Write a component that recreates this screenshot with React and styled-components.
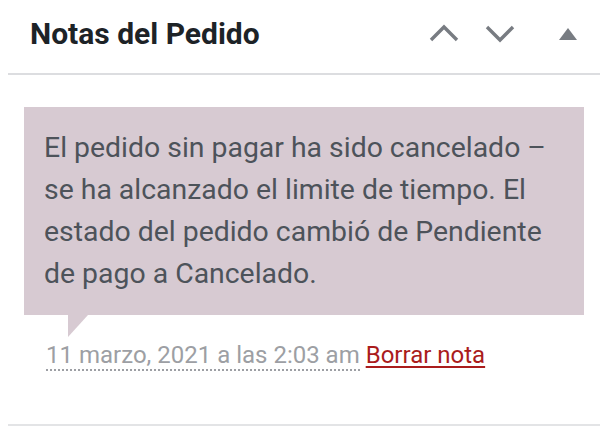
import React from 'react';
import styled, { createGlobalStyle } from 'styled-components';

const GlobalStyle = createGlobalStyle`
  html, body {
    margin: 0;
    padding: 0;
    background: #ffffff;
  }
  body {
    font-family: Roboto, "Liberation Sans", Arial, sans-serif;
  }
`;

const App = () => {
  return (
    <>
      <GlobalStyle />
      <Panel>
        <PanelHeader>
          <Title>Notas del Pedido</Title>
          <Actions>
            <HandleButton aria-label="Subir">
              <svg width="32" height="20" viewBox="0 0 32 20">
                <polyline points="3,16 16,3 29,16" fill="none" stroke="#787c82" strokeWidth="3.4" />
              </svg>
            </HandleButton>
            <HandleButton aria-label="Bajar">
              <svg width="32" height="20" viewBox="0 0 32 20">
                <polyline points="3,3 16,16 29,3" fill="none" stroke="#787c82" strokeWidth="3.4" />
              </svg>
            </HandleButton>
            <HandleButton aria-label="Alternar panel" $toggle>
              <svg width="18" height="12" viewBox="0 0 18 12">
                <polygon points="9,0 18,12 0,12" fill="#787c82" />
              </svg>
            </HandleButton>
          </Actions>
        </PanelHeader>
        <PanelBody>
          <Note>
            <NoteContent>
              El pedido sin pagar ha sido cancelado – se ha alcanzado el limite de tiempo. El estado del pedido cambió de Pendiente de pago a Cancelado.
            </NoteContent>
            <Meta>
              <ExactDate title="2021-03-11 02:03:00">11 marzo, 2021 a las 2:03 am</ExactDate>{' '}
              <DeleteLink href="#">Borrar nota</DeleteLink>
            </Meta>
          </Note>
        </PanelBody>
        <PanelFooter />
      </Panel>
    </>
  );
};

const Panel = styled.div`
  margin-left: 8px;
  width: 592px;
  background: #ffffff;
`;

const PanelHeader = styled.div`
  display: flex;
  align-items: center;
  justify-content: space-between;
  height: 75px;
  padding: 0 4px 5px 22px;
  box-sizing: border-box;
  border-bottom: 2px solid #dcdde0;
`;

const Title = styled.h2`
  margin: 0;
  font-family: Roboto, "Liberation Sans", Arial, sans-serif;
  font-weight: 700;
  font-size: 30px;
  line-height: 1.4;
  color: #1d2327;
`;

const Actions = styled.div`
  display: flex;
  align-items: center;
`;

const HandleButton = styled.button`
  display: flex;
  align-items: center;
  justify-content: center;
  width: 56px;
  height: 56px;
  margin-left: ${(p) => (p.$toggle ? '12px' : '0')};
  padding: 0;
  border: 0;
  background: transparent;
  cursor: pointer;
`;

const PanelBody = styled.div`
  padding: 32px 16px 51px 16px;
`;

const Note = styled.div`
  display: flex;
  flex-direction: column;
`;

const NoteContent = styled.p`
  position: relative;
  margin: 0;
  padding: 20px;
  background: #d7cad2;
  font-family: Roboto, "Liberation Sans", Arial, sans-serif;
  font-size: 28.4px;
  line-height: 42px;
  color: #4d535a;

  &::after {
    content: '';
    position: absolute;
    left: 44px;
    bottom: -22px;
    width: 0;
    height: 0;
    border-style: solid;
    border-width: 22px 20px 0 0;
    border-color: #d7cad2 transparent;
  }
`;

const Meta = styled.p`
  margin: 0;
  padding: 22px 20px 0 22px;
  font-family: Roboto, "Liberation Sans", Arial, sans-serif;
  font-size: 24px;
  line-height: 36px;
  color: #9d9fa4;
`;

const ExactDate = styled.span`
  border-bottom: 2px dotted #9d9fa4;
`;

const DeleteLink = styled.a`
  color: #aa1c1c;
  text-decoration: underline;
  text-underline-offset: 3px;
`;

const PanelFooter = styled.div`
  border-top: 2px solid #e3e4e6;
`;

export default App;
